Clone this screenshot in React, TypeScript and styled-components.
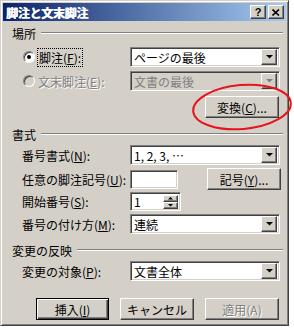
import React from 'react';
import styled, { createGlobalStyle, css } from 'styled-components';

const face = '#d4d0c8';
const shadow = '#808080';
const dark = '#404040';
const font = '"MS UI Gothic", "Noto Sans CJK JP", "Liberation Sans", sans-serif';

const GlobalStyle = createGlobalStyle`
  html, body {
    margin: 0;
    padding: 0;
    background: #ffffff;
  }
  body {
    font-family: ${font};
    font-size: 12px;
    color: #000000;
  }
`;

const raised = css`
  border: 1px solid;
  border-color: #ffffff ${dark} ${dark} #ffffff;
  box-shadow: inset -1px -1px 0 ${shadow}, inset 1px 1px 0 ${face};
`;

const sunken = css`
  border: 1px solid;
  border-color: ${shadow} #ffffff #ffffff ${shadow};
  box-shadow: inset 1px 1px 0 ${dark}, inset -1px -1px 0 ${face};
`;

const Window = styled.div`
  position: relative;
  box-sizing: border-box;
  width: 289px;
  height: 326px;
  background: ${face};
  border: 1px solid;
  border-color: ${face} ${dark} ${dark} ${face};
  box-shadow: inset 1px 1px 0 #ffffff, inset -1px -1px 0 ${shadow};
  padding: 2px;
  display: flex;
  flex-direction: column;
`;

const TitleBar = styled.div`
  height: 18px;
  display: flex;
  align-items: center;
  padding: 0 2px 0 3px;
  background: linear-gradient(90deg, #0a246a 0%, #a6caf0 100%);
`;

const TitleText = styled.span`
  flex: 1;
  color: #ffffff;
  font-weight: bold;
  font-size: 12px;
  letter-spacing: -0.3px;
  text-shadow: 0.6px 0 0 #ffffff;
`;

const CaptionButton = styled.div<{ $gap?: number }>`
  box-sizing: border-box;
  width: 16px;
  height: 14px;
  background: ${face};
  ${raised};
  display: flex;
  align-items: center;
  justify-content: center;
  font-family: "Liberation Sans", sans-serif;
  font-weight: bold;
  font-size: 11px;
  line-height: 1;
  margin-left: ${(p) => p.$gap ?? 0}px;
`;

const Content = styled.div`
  display: flex;
  flex-direction: column;
  padding: 0 5px 0 9px;
`;

const Header = styled.div<{ $top: number }>`
  display: flex;
  align-items: center;
  height: 14px;
  margin-top: ${(p) => p.$top}px;
`;

const HeaderLine = styled.div`
  flex: 1;
  height: 0;
  margin: 0 -2px 0 5px;
  border-top: 1px solid ${shadow};
  border-bottom: 1px solid #ffffff;
`;

const Row = styled.div<{ $top: number; $h?: number }>`
  display: flex;
  align-items: center;
  height: ${(p) => p.$h ?? 20}px;
  margin-top: ${(p) => p.$top}px;
  padding-left: 10px;
`;

const Label = styled.div<{ $disabled?: boolean }>`
  width: 108px;
  display: flex;
  align-items: center;
  white-space: nowrap;
  color: ${(p) => (p.$disabled ? shadow : '#000')};
  text-shadow: ${(p) => (p.$disabled ? '1px 1px 0 #fff' : 'none')};
`;

const Radio = styled.span<{ $disabled?: boolean }>`
  box-sizing: border-box;
  width: 12px;
  height: 12px;
  border-radius: 50%;
  margin: 0 3px 0 1px;
  background: ${(p) => (p.$disabled ? face : '#fff')};
  border: 1px solid;
  border-color: ${shadow} #fff #fff ${shadow};
  box-shadow: inset 1px 1px 0 ${dark};
  display: flex;
  align-items: center;
  justify-content: center;
`;

const Dot = styled.span`
  width: 4px;
  height: 4px;
  border-radius: 50%;
  background: #000;
`;

const Focus = styled.span`
  outline: 1px dotted #000;
  outline-offset: 0;
  padding: 0 1px;
`;

const Field = styled.div<{ $w: number; $disabled?: boolean; $h?: number }>`
  box-sizing: border-box;
  width: ${(p) => p.$w}px;
  height: ${(p) => p.$h ?? 20}px;
  background: ${(p) => (p.$disabled ? face : '#fff')};
  ${sunken};
  display: flex;
  align-items: center;
  padding: 2px;
  color: ${(p) => (p.$disabled ? shadow : '#000')};
`;

const FieldText = styled.span`
  flex: 1;
  padding-left: 1px;
  white-space: nowrap;
`;

const DropButton = styled.span`
  box-sizing: border-box;
  width: 16px;
  height: 16px;
  background: ${face};
  ${raised};
  display: flex;
  align-items: center;
  justify-content: center;
`;

const SpinStack = styled.span`
  display: flex;
  flex-direction: column;
`;

const SpinButton = styled.span`
  box-sizing: border-box;
  width: 15px;
  height: 7px;
  background: ${face};
  ${raised};
  display: flex;
  align-items: center;
  justify-content: center;
`;

const ButtonRow = styled.div<{ $top: number }>`
  display: flex;
  justify-content: flex-end;
  gap: 11px;
  margin-top: ${(p) => p.$top}px;
  padding-right: 2px;
`;

const Button = styled.div<{ $default?: boolean; $disabled?: boolean; $w?: number }>`
  box-sizing: border-box;
  width: ${(p) => p.$w ?? 74}px;
  height: 22px;
  background: ${face};
  display: flex;
  align-items: center;
  justify-content: center;
  white-space: nowrap;
  color: ${(p) => (p.$disabled ? shadow : '#000')};
  text-shadow: ${(p) => (p.$disabled ? '1px 1px 0 #fff' : 'none')};
  ${(p) =>
    p.$default
      ? css`
          border: 1px solid #000;
          box-shadow: inset 1px 1px 0 #fff, inset -1px -1px 0 ${dark}, inset -2px -2px 0 ${shadow};
        `
      : raised}
`;

const Spacer = styled.div`
  flex: 1;
`;

const Ring = styled.svg`
  position: absolute;
  left: 191px;
  top: 82px;
  overflow: visible;
  pointer-events: none;
`;

const Arrow = ({ down = true, size = 7, color = '#000' }) => (
  <svg width={size} height={Math.ceil(size / 2)} viewBox={`0 0 ${size} ${Math.ceil(size / 2)}`}>
    <polygon
      points={down ? `0,0 ${size},0 ${size / 2},${size / 2}` : `0,${size / 2} ${size},${size / 2} ${size / 2},0`}
      fill={color}
    />
  </svg>
);

const Combo = ({ text, disabled }: { text: string; disabled?: boolean }) => (
  <Field $w={150} $disabled={disabled}>
    <FieldText>{text}</FieldText>
    <DropButton>
      <Arrow color={disabled ? shadow : '#000'} />
    </DropButton>
  </Field>
);

export default function App() {
  return (
    <>
      <GlobalStyle />
      <Window>
        <TitleBar>
          <TitleText>脚注と文末脚注</TitleText>
          <CaptionButton>?</CaptionButton>
          <CaptionButton $gap={2}>
            <svg width="8" height="7" viewBox="0 0 8 7">
              <path d="M0.5 0.5 L7 6.5 M7 0.5 L0.5 6.5" stroke="#000" strokeWidth="1.6" />
            </svg>
          </CaptionButton>
        </TitleBar>
        <Content>
          <Header $top={5}>
            場所
            <HeaderLine />
          </Header>
          <Row $top={7}>
            <Label>
              <Radio>
                <Dot />
              </Radio>
              <Focus>
                脚注(<u>F</u>):
              </Focus>
            </Label>
            <Combo text="ページの最後" />
          </Row>
          <Row $top={4}>
            <Label $disabled>
              <Radio $disabled />
              文末脚注(<u>E</u>):
            </Label>
            <Combo text="文書の最後" disabled />
          </Row>
          <ButtonRow $top={5}>
            <Button>
              変換(<u>C</u>)...
            </Button>
          </ButtonRow>
          <Header $top={9}>
            書式
            <HeaderLine />
          </Header>
          <Row $top={4}>
            <Label>
              番号書式(<u>N</u>):
            </Label>
            <Combo text="1, 2, 3, …" />
          </Row>
          <Row $top={3} $h={22}>
            <Label>
              任意の脚注記号(<u>U</u>):
            </Label>
            <Field $w={48} $h={19} />
            <Spacer />
            <Button>
              記号(<u>Y</u>)...
            </Button>
          </Row>
          <Row $top={2} $h={19}>
            <Label>
              開始番号(<u>S</u>):
            </Label>
            <Field $w={51} $h={19}>
              <FieldText>1</FieldText>
              <SpinStack>
                <SpinButton>
                  <Arrow down={false} size={5} />
                </SpinButton>
                <SpinButton>
                  <Arrow size={5} />
                </SpinButton>
              </SpinStack>
            </Field>
          </Row>
          <Row $top={3}>
            <Label>
              番号の付け方(<u>M</u>):
            </Label>
            <Combo text="連続" />
          </Row>
          <Header $top={9}>
            変更の反映
            <HeaderLine />
          </Header>
          <Row $top={4}>
            <Label>
              変更の対象(<u>P</u>):
            </Label>
            <Combo text="文書全体" />
          </Row>
          <ButtonRow $top={17}>
            <Button $default $w={73}>
              挿入(<u>I</u>)
            </Button>
            <Button>キャンセル</Button>
            <Button $disabled>適用(A)</Button>
          </ButtonRow>
        </Content>
        <Ring width="100" height="48" viewBox="0 0 100 48">
          <ellipse cx="50" cy="24" rx="49" ry="22" fill="none" stroke="#e8141c" strokeWidth="2" transform="rotate(-5 50 24)" />
        </Ring>
      </Window>
    </>
  );
}
